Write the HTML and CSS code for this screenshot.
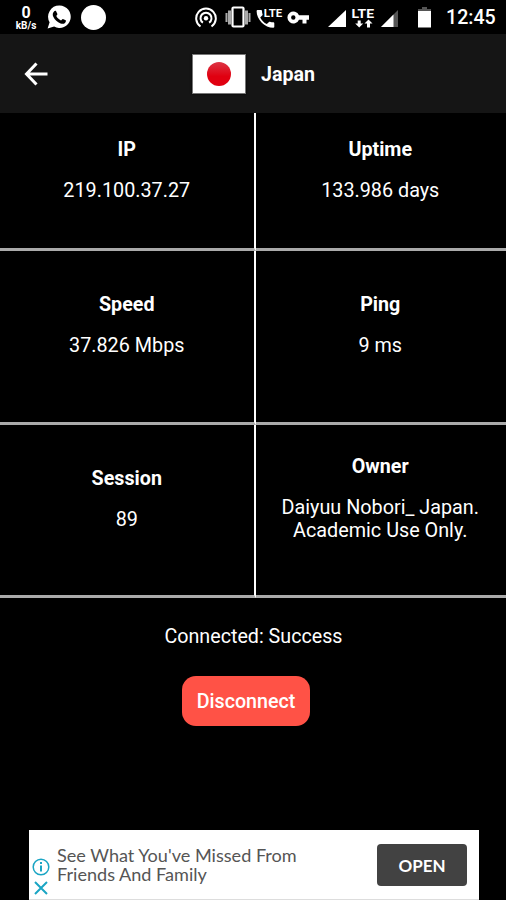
FILE: index.html
```html
<!DOCTYPE html>
<html lang="en">
<head>
    <meta charset="UTF-8">
    <meta name="viewport" content="width=device-width, initial-scale=1.0">
    <title>Japan</title>
    <link rel="stylesheet" href="styles.css">
</head>
<body>
    <div class="status-bar">
        <div class="net-speed">
            <span class="net-value">0</span>
            <span class="net-unit">kB/s</span>
        </div>
        <svg class="icon-whatsapp" width="24" height="24" viewBox="0 0 24 24">
            <path fill="#fff" d="M12.500 0.500a11.200 11.200 0 1 1-5.400 21L0.600 23.500l2-6.300A11.200 11.200 0 0 1 12.500 0.500z"/>
            <path fill="#000" d="M7.200 6.200c.5-.6 1.500-.7 1.900 0l1.300 2.900c.2.500-.9 1.500-1.100 1.900 1 2 2.600 3.500 4.700 4.400.4 0 1.400-1.700 1.900-1.500l2.800 1.400c.6.400 0 2-.7 2.600-1.300 1.100-2.800 1.100-4.400.5-3.300-1.200-5.800-3.500-7.300-6.600-1-2.100-.6-4.200.9-5.600z"/>
        </svg>
        <span class="dot"></span>
        <svg class="icon-hotspot" width="22" height="22" viewBox="0 0 22 22" fill="none" stroke="#fff" stroke-width="2">
            <path d="M5.500 19.500A9.800 9.800 0 1 1 16.500 19.500"/>
            <path d="M7.900 15.700A5.500 5.500 0 1 1 14.100 15.700"/>
            <circle cx="11" cy="11.300" r="2.200" fill="#fff" stroke="none"/>
        </svg>
        <svg class="icon-vibrate" width="28" height="22" viewBox="0 0 28 22">
            <path fill="#aaa" d="M1.500 7h2v9h-2zM4 4.500h3v14H4zM21 4.500h3v14h-3zM24.500 7h2v9h-2z"/>
            <rect x="8.500" y="1.500" width="11" height="19" rx="1" fill="#000" stroke="#fff" stroke-width="2.200"/>
        </svg>
        <svg class="icon-call" width="27" height="22" viewBox="0 0 27 22">
            <path fill="#fff" d="M1.500 2h3.600c.5 0 .9.400.9.900 0 1.200.2 2.400.6 3.500.1.300 0 .7-.2.900L4.200 9.500c1.400 2.900 3.700 5.200 6.600 6.600l2.200-2.200c.3-.3.600-.3.900-.2 1.100.4 2.300.600 3.500.6.500 0 .9.400.9.900v3.600c0 .5-.4.900-.9.900C8.800 19.700.6 11.500.6 2.900c0-.5.400-.9.900-.9z"/>
            <text class="svg-label" x="7.800" y="9" font-size="11" textLength="18.500" lengthAdjust="spacingAndGlyphs">LTE</text>
        </svg>
        <svg class="icon-key" width="22" height="13" viewBox="0 0 22 13">
            <path fill="#fff" fill-rule="evenodd" d="M12 4.300A6 6 0 1 0 12 8.700h3.500V12.500h4V8.700H22V4.300zM6.300 4.300a2.200 2.200 0 1 1 0 4.400 2.200 2.200 0 0 1 0-4.400z"/>
        </svg>
        <svg class="icon-signal" width="18" height="17" viewBox="0 0 18 17">
            <path fill="#fff" d="M0 17 18 0v17z"/>
        </svg>
        <svg class="icon-lte" width="24" height="25" viewBox="0 0 24 25">
            <text class="svg-label" x="0.500" y="14" font-size="13.500" textLength="22.500" lengthAdjust="spacingAndGlyphs">LTE</text>
            <path fill="#fff" d="M8.200 23.500 4.200 19.500h2.500v-3h3v3h2.500zM17.500 15.500l4 4H19v4h-3v-4h-2.500z"/>
        </svg>
        <svg class="icon-signal-weak" width="17" height="17" viewBox="0 0 17 17">
            <path fill="#555" d="M0 17 17 0v17z"/>
            <path fill="#fff" d="M0 17 12.500 4.500V17z"/>
        </svg>
        <svg class="icon-battery" width="13" height="21" viewBox="0 0 13 21">
            <path fill="#555" d="M4 0h5v2h4v3H0V2h4z"/>
            <path fill="#fff" d="M0 4h13v16.500H0z"/>
        </svg>
        <span class="clock">12:45</span>
    </div>

    <header>
        <svg class="back" width="24" height="24" viewBox="0 0 24 24" fill="none" stroke="#fff" stroke-width="3">
            <path d="M23.500 12H2.500M12.500 1.500 2.500 12l10 10.500"/>
        </svg>
        <div class="flag"><span></span></div>
        <h1>Japan</h1>
    </header>

    <div class="stats">
        <div class="cell">
            <h2>IP</h2>
            <p>219.100.37.27</p>
        </div>
        <div class="cell">
            <h2>Uptime</h2>
            <p>133.986 days</p>
        </div>
        <div class="cell">
            <h2>Speed</h2>
            <p>37.826 Mbps</p>
        </div>
        <div class="cell">
            <h2>Ping</h2>
            <p>9 ms</p>
        </div>
        <div class="cell">
            <h2>Session</h2>
            <p>89</p>
        </div>
        <div class="cell">
            <h2>Owner</h2>
            <p>Daiyuu Nobori_ Japan.<br>Academic Use Only.</p>
        </div>
    </div>

    <div class="connection">
        <p>Connected: Success</p>
        <button id="disconnectButton">Disconnect</button>
    </div>

    <div class="ad">
        <div class="ad-icons">
            <svg width="18" height="18" viewBox="0 0 18 18" fill="none" stroke="#1aa5c4" stroke-width="1.500">
                <circle cx="9" cy="9" r="7.800"/>
                <path stroke-width="2" d="M9 7.500v6M9 4v2"/>
            </svg>
            <svg width="18" height="14" viewBox="0 0 18 14" fill="none" stroke="#1aa5c4" stroke-width="2">
                <path d="M3 1l12 12M15 1 3 13"/>
            </svg>
        </div>
        <p>See What You've Missed From<br>Friends And Family</p>
        <button id="openButton">OPEN</button>
    </div>
</body>
</html>
```
FILE: styles.css
```css
body {
    background-color: #000;
    color: #fff;
    font-family: Roboto, sans-serif;
    margin: 0;
    height: 900px;
    display: flex;
    flex-direction: column;
    overflow: hidden;
}

h1, h2, p {
    margin: 0;
}

.status-bar {
    height: 34px;
    display: flex;
    align-items: flex-start;
    flex-shrink: 0;
}

.status-bar svg {
    flex-shrink: 0;
}

.net-speed {
    width: 22px;
    margin: 5px 0 0 15px;
    display: flex;
    flex-direction: column;
    align-items: center;
    font-weight: bold;
}

.net-value {
    font-size: 16px;
    line-height: 16px;
}

.net-unit {
    font-size: 10px;
    line-height: 10px;
}

.icon-whatsapp {
    margin: 5px 0 0 10px;
}

.dot {
    width: 25px;
    height: 25px;
    margin: 5px 0 0 10px;
    border-radius: 50%;
    background-color: #fff;
}

.icon-hotspot {
    margin: 7px 0 0 89px;
}

.icon-vibrate {
    margin: 6px 0 0 7px;
}

.icon-call {
    margin: 8px 0 0 4px;
}

.icon-key {
    margin: 11px 0 0 4px;
}

.icon-signal {
    margin: 10px 0 0 19px;
}

.icon-lte {
    margin: 4px 0 0 5px;
}

.icon-signal-weak {
    margin: 10px 0 0 6px;
}

.icon-battery {
    margin: 7px 0 0 20px;
}

.svg-label {
    fill: #fff;
    font-family: Roboto, sans-serif;
    font-weight: bold;
}

.clock {
    margin: 6px 0 0 15px;
    font-size: 19.6px;
    line-height: 24px;
    font-weight: 500;
}

header {
    height: 79px;
    display: flex;
    align-items: center;
    flex-shrink: 0;
    background-color: #151515;
}

.back {
    margin-left: 24px;
}

.flag {
    width: 52px;
    height: 38px;
    margin-left: 144px;
    display: flex;
    align-items: center;
    justify-content: center;
    background-color: #fff;
    border: 1px solid #777;
    box-shadow: 0 0 2px #000;
}

.flag span {
    width: 24px;
    height: 24px;
    border-radius: 50%;
    background: linear-gradient(#dc3545, #e00010 60%);
}

h1 {
    margin: 2px 0 0 15px;
    font-size: 19.6px;
    line-height: 24px;
}

.stats {
    display: grid;
    grid-template-columns: 255.5px 250.5px;
    grid-template-rows: 138px 174px 173px;
}

.cell {
    display: flex;
    flex-direction: column;
    align-items: center;
    box-sizing: border-box;
    padding-top: 42px;
    border-bottom: 3px solid #aaa;
    text-align: center;
}

.cell:nth-child(-n+2) {
    padding-top: 25px;
}

.cell:nth-child(6) {
    padding-top: 30px;
}

.cell:nth-child(odd) {
    border-right: 2px solid #fff;
}

.cell:nth-child(even) {
    padding-right: 1px;
}

.cell h2 {
    font-size: 19.7px;
    line-height: 23px;
}

.cell p {
    margin-top: 18px;
    font-size: 19.8px;
    line-height: 23px;
}

.connection {
    display: flex;
    flex-direction: column;
    align-items: center;
}

.connection p {
    margin-top: 27px;
    padding-left: 1px;
    font-size: 19.7px;
    line-height: 23px;
}

#disconnectButton {
    width: 128px;
    height: 50px;
    margin: 28px 14px 0 0;
    padding: 1px 0 0;
    border: none;
    border-radius: 14px;
    background-color: #ff5246;
    color: #fff;
    font-family: Roboto, sans-serif;
    font-size: 19.7px;
    font-weight: 500;
}

.ad {
    width: 450px;
    height: 70px;
    margin: auto 0 0 29px;
    display: flex;
    align-items: flex-start;
    flex-shrink: 0;
    background-color: #fff;
    border-bottom: 1px solid #ddd;
    box-sizing: border-box;
}

.ad-icons {
    width: 18px;
    margin: 28px 0 0 3px;
    display: flex;
    flex-direction: column;
    gap: 5px;
}

.ad p {
    margin: 16px 0 0 7px;
    color: #555;
    font-family: Lato, sans-serif;
    font-size: 18.1px;
    line-height: 19px;
    white-space: nowrap;
}

#openButton {
    width: 90px;
    height: 42px;
    margin: 14px 12px 0 auto;
    padding: 0;
    border: none;
    border-radius: 4px;
    background-color: #424242;
    color: #fff;
    font-family: Lato, sans-serif;
    font-size: 17px;
    font-weight: bold;
}
```
